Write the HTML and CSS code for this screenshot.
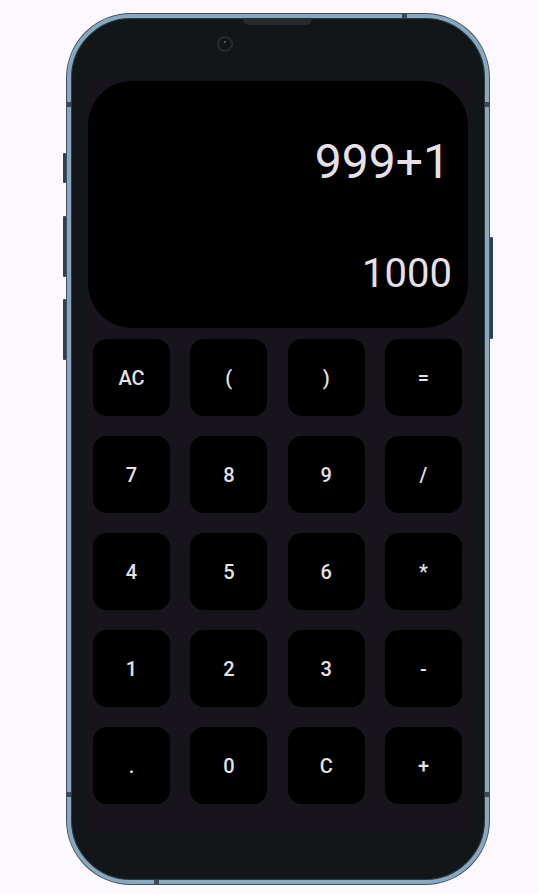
FILE: index.html
```html
<!DOCTYPE html>
<html>
<head>
<meta charset="utf-8">
<link rel="stylesheet" href="styles.css">
</head>
<body>
<div class="phone">
  <span class="side side-l1"></span>
  <span class="side side-l2"></span>
  <span class="side side-l3"></span>
  <span class="side side-r1"></span>
  <span class="band band-top"></span>
  <span class="band band-bottom"></span>
  <span class="band band-lt"></span>
  <span class="band band-rt"></span>
  <span class="band band-lb"></span>
  <span class="band band-rb"></span>
  <div class="notch"></div>
  <div class="camera"><span class="lens"></span></div>
  <div class="app">
    <div class="display">
      <div class="expr">999+1</div>
      <div class="result">1000</div>
    </div>
    <div class="keys">
      <div class="key">AC</div><div class="key">(</div><div class="key">)</div><div class="key">=</div>
      <div class="key">7</div><div class="key">8</div><div class="key">9</div><div class="key">/</div>
      <div class="key">4</div><div class="key">5</div><div class="key">6</div><div class="key">*</div>
      <div class="key">1</div><div class="key">2</div><div class="key">3</div><div class="key">-</div>
      <div class="key">.</div><div class="key">0</div><div class="key">C</div><div class="key">+</div>
    </div>
  </div>
</div>
</body>
</html>
```
FILE: styles.css
```css
html, body {
  margin: 0;
  padding: 0;
}
body {
  background: #fdf7fe;
  font-family: Roboto, "Noto Sans", sans-serif;
  padding-top: 14px;
  height: 894px;
  box-sizing: border-box;
  overflow: hidden;
}
.phone {
  position: relative;
  margin-left: 67px;
  width: 422px;
  height: 870px;
  box-sizing: border-box;
  border: 4px solid #8aa8bd;
  border-radius: 64px;
  background: #131618;
  box-shadow: 0 0 0 1px #3b5061, inset 0 0 0 1px #2a3947;
}
.side {
  position: absolute;
  width: 3px;
  background: #2c4254;
  border-radius: 1px;
}
.side-l1 { left: -8px; top: 135px; height: 30px; }
.side-l2 { left: -8px; top: 198px; height: 61px; }
.side-l3 { left: -8px; top: 281px; height: 61px; }
.side-r1 { right: -8px; top: 219px; height: 102px; }
.band {
  position: absolute;
  background: #3a4a56;
}
.band-top { top: -5px; left: 331px; width: 5px; height: 5px; }
.band-bottom { bottom: -5px; left: 83px; width: 5px; height: 5px; }
.band-lt { left: -5px; top: 84px; width: 5px; height: 5px; }
.band-rt { right: -5px; top: 84px; width: 5px; height: 5px; }
.band-lb { left: -5px; top: 774px; width: 5px; height: 5px; }
.band-rb { right: -5px; top: 774px; width: 5px; height: 5px; }
.notch {
  width: 69px;
  height: 7px;
  margin-left: 172px;
  background: #272b2e;
  border-radius: 0 0 6px 6px;
}
.camera {
  width: 16px;
  height: 16px;
  box-sizing: border-box;
  margin-left: 146px;
  margin-top: 11px;
  border: 2px solid #262a2d;
  border-radius: 50%;
  display: flex;
  justify-content: center;
  padding-top: 3px;
}
.lens {
  width: 2px;
  height: 2px;
  background: #6a6f72;
  border-radius: 50%;
}
.app {
  margin-left: 16px;
  margin-top: 28px;
  width: 382px;
  height: 752px;
  background: #17151b;
  padding-top: 1px;
  box-sizing: border-box;
}
.display {
  margin: 0 1px;
  height: 247px;
  background: #000;
  border-radius: 44px;
  color: #e6e1e6;
  text-align: right;
  padding-top: 57px;
  box-sizing: border-box;
}
.expr {
  font-size: 48px;
  line-height: 48px;
  padding-right: 18px;
}
.result {
  font-size: 40px;
  line-height: 40px;
  margin-top: 68px;
  padding-right: 16px;
}
.keys {
  margin-top: 11px;
  padding: 0 7px 0 6px;
  display: grid;
  grid-template-columns: repeat(4, 77px);
  grid-auto-rows: 77px;
  justify-content: space-between;
  row-gap: 20px;
}
.key {
  background: #000;
  border-radius: 14px;
  color: #e6e1e6;
  font-size: 20px;
  font-weight: 500;
  display: flex;
  align-items: center;
  justify-content: center;
}
```
